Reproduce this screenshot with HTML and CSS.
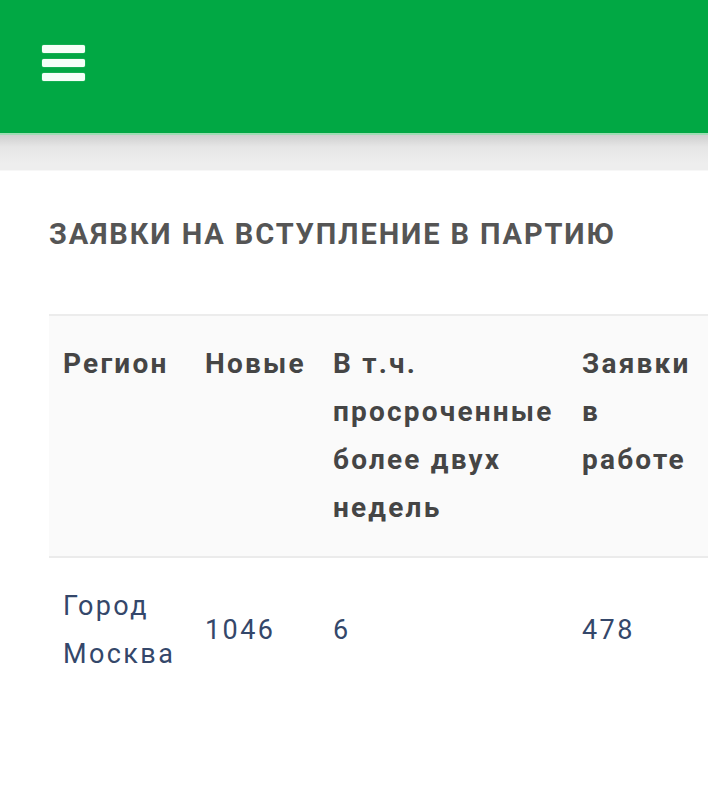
FILE: index.html
```html
<!DOCTYPE html>
<html lang="ru">
<head>
<meta charset="utf-8">
<title>Заявки на вступление в партию</title>
<link rel="stylesheet" href="styles.css">
</head>
<body>
<header class="topbar">
  <button class="burger" aria-label="Меню">
    <span class="bar"></span>
    <span class="bar"></span>
    <span class="bar"></span>
  </button>
</header>
<div class="shade"></div>
<main class="content">
  <h1 class="title">ЗАЯВКИ НА ВСТУПЛЕНИЕ В ПАРТИЮ</h1>
  <table class="stats">
    <colgroup>
      <col class="c1"><col class="c2"><col class="c3"><col class="c4">
    </colgroup>
    <thead>
      <tr>
        <th>Регион</th>
        <th>Новые</th>
        <th>В т.ч. просроченные более двух недель</th>
        <th>Заявки в работе</th>
      </tr>
    </thead>
    <tbody>
      <tr>
        <td>Город Москва</td>
        <td>1046</td>
        <td>6</td>
        <td>478</td>
      </tr>
    </tbody>
  </table>
</main>
</body>
</html>
```
FILE: styles.css
```css
html, body {
  margin: 0;
  padding: 0;
  background: #ffffff;
  overflow-x: hidden;
}
body {
  font-family: Roboto, "Liberation Sans", sans-serif;
  width: 708px;
}
.topbar {
  height: 133px;
  background: #01a844;
  display: flex;
  align-items: flex-start;
  padding-left: 42px;
  box-sizing: border-box;
}
.burger {
  margin-top: 45px;
  padding: 0;
  border: 0;
  background: transparent;
  display: flex;
  flex-direction: column;
  gap: 6px;
}
.bar {
  display: block;
  width: 43px;
  height: 8px;
  border-radius: 2px;
  background: #f4fff8;
  box-shadow: 0 0 1px rgba(220, 255, 230, 0.9);
}
.shade {
  height: 37px;
  background: linear-gradient(#9fdcb4 0, #9fdcb4 2px, #cfcfcf 2px, #e6e6e6 14px, #eeeeee 30px, #eeeeee 100%);
  border-bottom: 1px solid #f7f7f7;
}
.content {
  padding-left: 49px;
}
.title {
  margin: 46px 0 0;
  font-size: 29px;
  line-height: 34px;
  font-weight: 700;
  letter-spacing: 1.9px;
  color: #555555;
}
.stats {
  margin-top: 63px;
  width: 659px;
  table-layout: fixed;
  border-collapse: collapse;
  border-top: 2px solid #ececec;
}
.c1 { width: 142px; }
.c2 { width: 128px; }
.c3 { width: 249px; }
.c4 { width: 140px; }
.stats thead tr {
  background: #fafafa;
  border-bottom: 2px solid #ebebeb;
}
.stats th {
  text-align: left;
  vertical-align: top;
  padding: 24px 0 24px 14px;
  font-size: 28px;
  line-height: 48px;
  font-weight: 700;
  letter-spacing: 2.2px;
  color: #454545;
}
.stats td {
  text-align: left;
  vertical-align: middle;
  padding: 24px 0 24px 14px;
  font-size: 27px;
  line-height: 48px;
  font-weight: 400;
  letter-spacing: 2.4px;
  color: #34476a;
}
```
